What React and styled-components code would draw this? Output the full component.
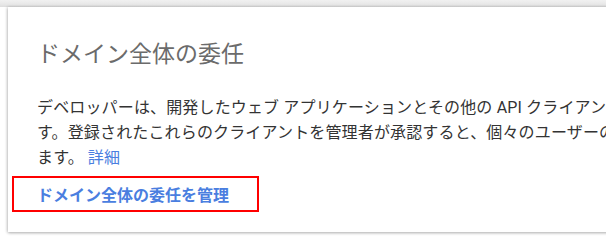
import React from "react";
import styled, { createGlobalStyle } from "styled-components";

const GlobalStyle = createGlobalStyle`
  html, body {
    margin: 0;
    padding: 0;
    background: #ffffff;
    overflow: hidden;
  }
  body {
    font-family: Roboto, "Noto Sans CJK JP", sans-serif;
  }
`;

const Page = styled.div`
  width: 606px;
  height: 246px;
  overflow: hidden;
  background: #ffffff;
`;

const TopShade = styled.div`
  height: 7px;
  background: linear-gradient(#f1f1f1, #e6e6e6 70%, #dcdcdc);
`;

const Card = styled.section`
  margin-left: 8px;
  width: 720px;
  background: #ffffff;
  box-shadow: 0 1px 3px rgba(0, 0, 0, 0.28), -1px 0 3px rgba(0, 0, 0, 0.12);
  padding: 32px 0 20px 29px;
  box-sizing: border-box;
`;

const Title = styled.h2`
  margin: 0;
  font-size: 23px;
  font-weight: 400;
  line-height: 32px;
  color: #6b6b6b;
`;

const Body = styled.p`
  margin: 24px 0 0;
  font-size: 16px;
  line-height: 25px;
  letter-spacing: 0.15px;
  color: #333333;
  white-space: nowrap;
`;

const Line = styled.span`
  display: block;
`;

const Learn = styled.a`
  color: #4a7ee0;
  text-decoration: none;
  margin-left: 4px;
`;

const Manage = styled.div`
  margin: 6px 0 0 -25px;
  width: 247px;
  height: 36px;
  box-sizing: border-box;
  border: 2px solid #ff0000;
  display: flex;
  align-items: center;
  padding-left: 23px;
`;

const ManageLink = styled.a`
  font-size: 16px;
  font-weight: 700;
  color: #4a7ee0;
  text-decoration: none;
`;

export default function App() {
  return (
    <Page>
      <GlobalStyle />
      <TopShade />
      <Card>
        <Title>ドメイン全体の委任</Title>
        <Body>
          <Line>デベロッパーは、開発したウェブ アプリケーションとその他の API クライアントを登録して、Google サービスのデータにアクセスできるようにすることができま</Line>
          <Line>す。登録されたこれらのクライアントを管理者が承認すると、個々のユーザーの同意やパスワードがなくても、ユーザーデータにアクセスできるようになり</Line>
          <Line>
            ます。<Learn href="#">詳細</Learn>
          </Line>
        </Body>
        <Manage>
          <ManageLink href="#">ドメイン全体の委任を管理</ManageLink>
        </Manage>
      </Card>
    </Page>
  );
}
